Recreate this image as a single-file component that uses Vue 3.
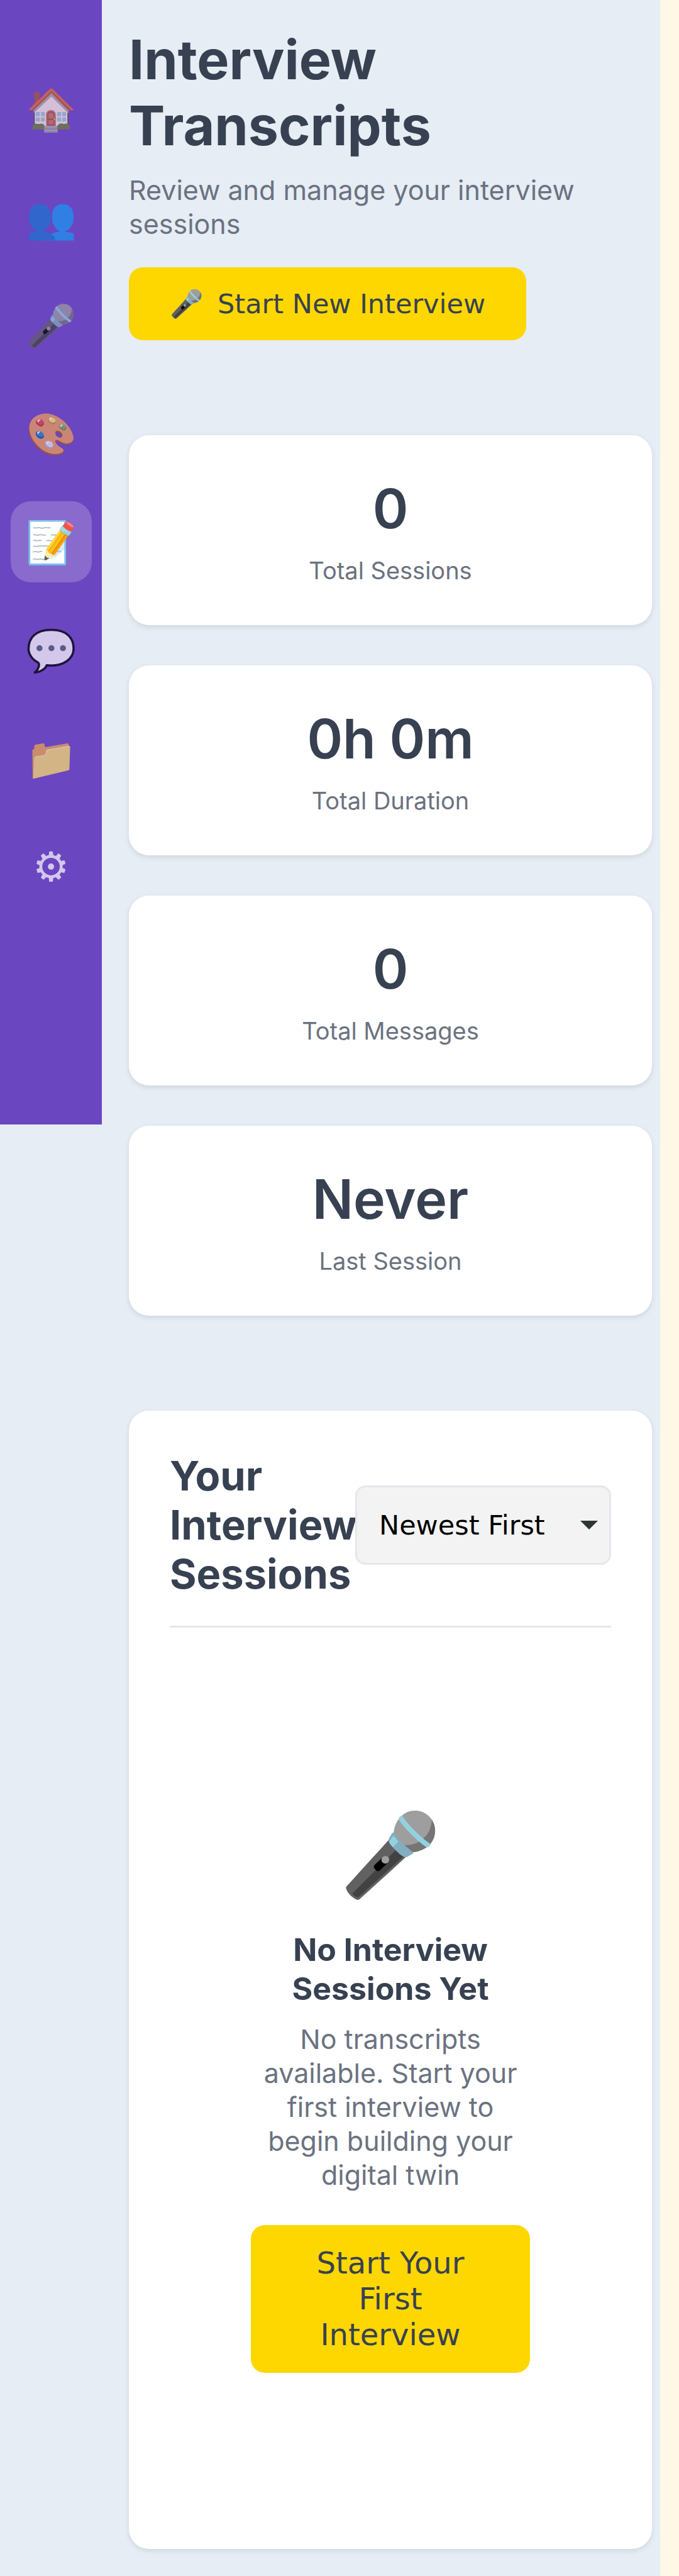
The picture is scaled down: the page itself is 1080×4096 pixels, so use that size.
<script setup>
import { ref } from 'vue'

const navItems = [
  { icon: '🏠', label: 'Home' },
  { icon: '👥', label: 'People' },
  { icon: '🎤', label: 'Interview' },
  { icon: '🎨', label: 'Studio' },
  { icon: '📝', label: 'Transcripts', active: true },
  { icon: '💬', label: 'Chat' },
  { icon: '📁', label: 'Files' },
  { icon: '⚙', label: 'Settings' },
]

const stats = [
  { value: '0', label: 'Total Sessions' },
  { value: '0h 0m', label: 'Total Duration' },
  { value: '0', label: 'Total Messages' },
  { value: 'Never', label: 'Last Session' },
]

const sortOrder = ref('newest')
</script>

<template>
  <div class="app">
    <nav class="sidebar" aria-label="Main">
      <a
        v-for="item in navItems"
        :key="item.label"
        href="#"
        class="nav-item"
        :class="{ active: item.active }"
        :aria-label="item.label"
      ><span class="nav-icon">{{ item.icon }}</span></a>
    </nav>

    <main class="main">
      <header class="page-header">
        <h1>Interview Transcripts</h1>
        <p class="subtitle">Review and manage your interview sessions</p>
        <button type="button" class="btn btn-start">
          <span>🎤</span>
          <span>Start New Interview</span>
        </button>
      </header>

      <section class="stats">
        <div v-for="stat in stats" :key="stat.label" class="stat-card">
          <div class="stat-value">{{ stat.value }}</div>
          <div class="stat-label">{{ stat.label }}</div>
        </div>
      </section>

      <section class="sessions">
        <div class="sessions-header">
          <h2>Your Interview Sessions</h2>
          <div class="sort">
            <select v-model="sortOrder" aria-label="Sort sessions">
              <option value="newest">Newest First</option>
              <option value="oldest">Oldest First</option>
            </select>
            <svg class="sort-arrow" viewBox="0 0 28 14" aria-hidden="true">
              <path d="M0 0H28L14 14Z" fill="#2e3436" />
            </svg>
          </div>
        </div>

        <div class="empty">
          <div class="empty-icon">🎤</div>
          <h3>No Interview Sessions Yet</h3>
          <p>No transcripts available. Start your first interview to begin building your digital twin</p>
          <button type="button" class="btn btn-first">Start Your First Interview</button>
        </div>
      </section>
    </main>
  </div>
</template>

<style>
body {
  margin: 0;
  background: #fff8e7;
}
</style>

<style scoped>
.app {
  display: flex;
  align-items: flex-start;
  margin-right: 30px;
  background: #e6edf5;
  font-family: Inter, sans-serif;
  color: #374151;
}

.app * {
  box-sizing: border-box;
}

h1, h2, h3, p {
  margin: 0;
}

.sidebar {
  flex: none;
  display: flex;
  flex-direction: column;
  align-items: center;
  gap: 43px;
  width: 162px;
  min-height: 1788px;
  padding-top: 109px;
  background: #6b46c1;
}

.nav-item {
  display: flex;
  align-items: center;
  justify-content: center;
  width: 129px;
  height: 129px;
  border-radius: 32px;
  color: #fff;
  font-size: 65px;
  line-height: 80px;
  text-decoration: none;
}

.nav-icon {
  opacity: 0.7;
}

.active {
  background: rgba(255, 255, 255, 0.2);
}

.active .nav-icon {
  opacity: 1;
}

.main {
  flex: 1;
  min-width: 0;
  padding: 43px 13px 43px 43px;
}

h1 {
  font-size: 86px;
  line-height: 105px;
  font-weight: 700;
}

.subtitle {
  margin: 22px 0 42px;
  color: #6b7280;
  font-size: 43px;
  line-height: 54px;
}

.btn {
  border: 0;
  border-radius: 22px;
  background: #ffd700;
  color: #374151;
  font-family: "DejaVu Sans", sans-serif;
  cursor: pointer;
}

.btn-start {
  display: flex;
  align-items: center;
  gap: 22px;
  height: 116px;
  padding: 0 65px;
  font-size: 43px;
}

.stats {
  display: flex;
  flex-direction: column;
  gap: 64px;
  margin: 151px 0;
}

.stat-card,
.sessions {
  border-radius: 32px;
  background: #fff;
  box-shadow: 0 3px 8px rgba(0, 0, 0, 0.1);
}

.stat-card {
  padding: 65px 65px 64px;
  text-align: center;
}

.stat-value {
  margin-bottom: 22px;
  font-size: 86px;
  line-height: 105px;
  font-weight: 600;
}

.stat-label {
  color: #6b7280;
  font-size: 38px;
  line-height: 46px;
}

.sessions {
  padding: 65px;
}

.sessions-header {
  display: flex;
  align-items: center;
  justify-content: space-between;
  margin-bottom: 65px;
  padding-bottom: 43px;
  border-bottom: 3px solid #e5e7eb;
}

h2 {
  min-width: 0;
  font-size: 65px;
  line-height: 78px;
  font-weight: 700;
}

.sort {
  flex: none;
  display: grid;
  align-items: center;
  width: 407px;
}

.sort > * {
  grid-area: 1 / 1;
}

select {
  appearance: none;
  width: 100%;
  height: 126px;
  padding: 0 35px;
  border: 3px solid #e5e7eb;
  border-radius: 16px;
  background: #f3f3f3;
  color: #000;
  font-family: "DejaVu Sans", sans-serif;
  font-size: 43px;
}

.sort-arrow {
  justify-self: end;
  width: 28px;
  height: 14px;
  margin-right: 21px;
  pointer-events: none;
}

.empty {
  padding: 215px 129px;
  text-align: center;
}

.empty-icon {
  margin-bottom: 43px;
  font-size: 129px;
  line-height: 158px;
}

h3 {
  font-size: 50px;
  line-height: 62px;
  font-weight: 700;
}

.empty p {
  margin: 22px 0 53px;
  color: #6b7280;
  font-size: 43px;
  line-height: 54px;
}

.btn-first {
  width: 100%;
  padding: 32px 86px;
  font-size: 48px;
  line-height: 57px;
}
</style>
